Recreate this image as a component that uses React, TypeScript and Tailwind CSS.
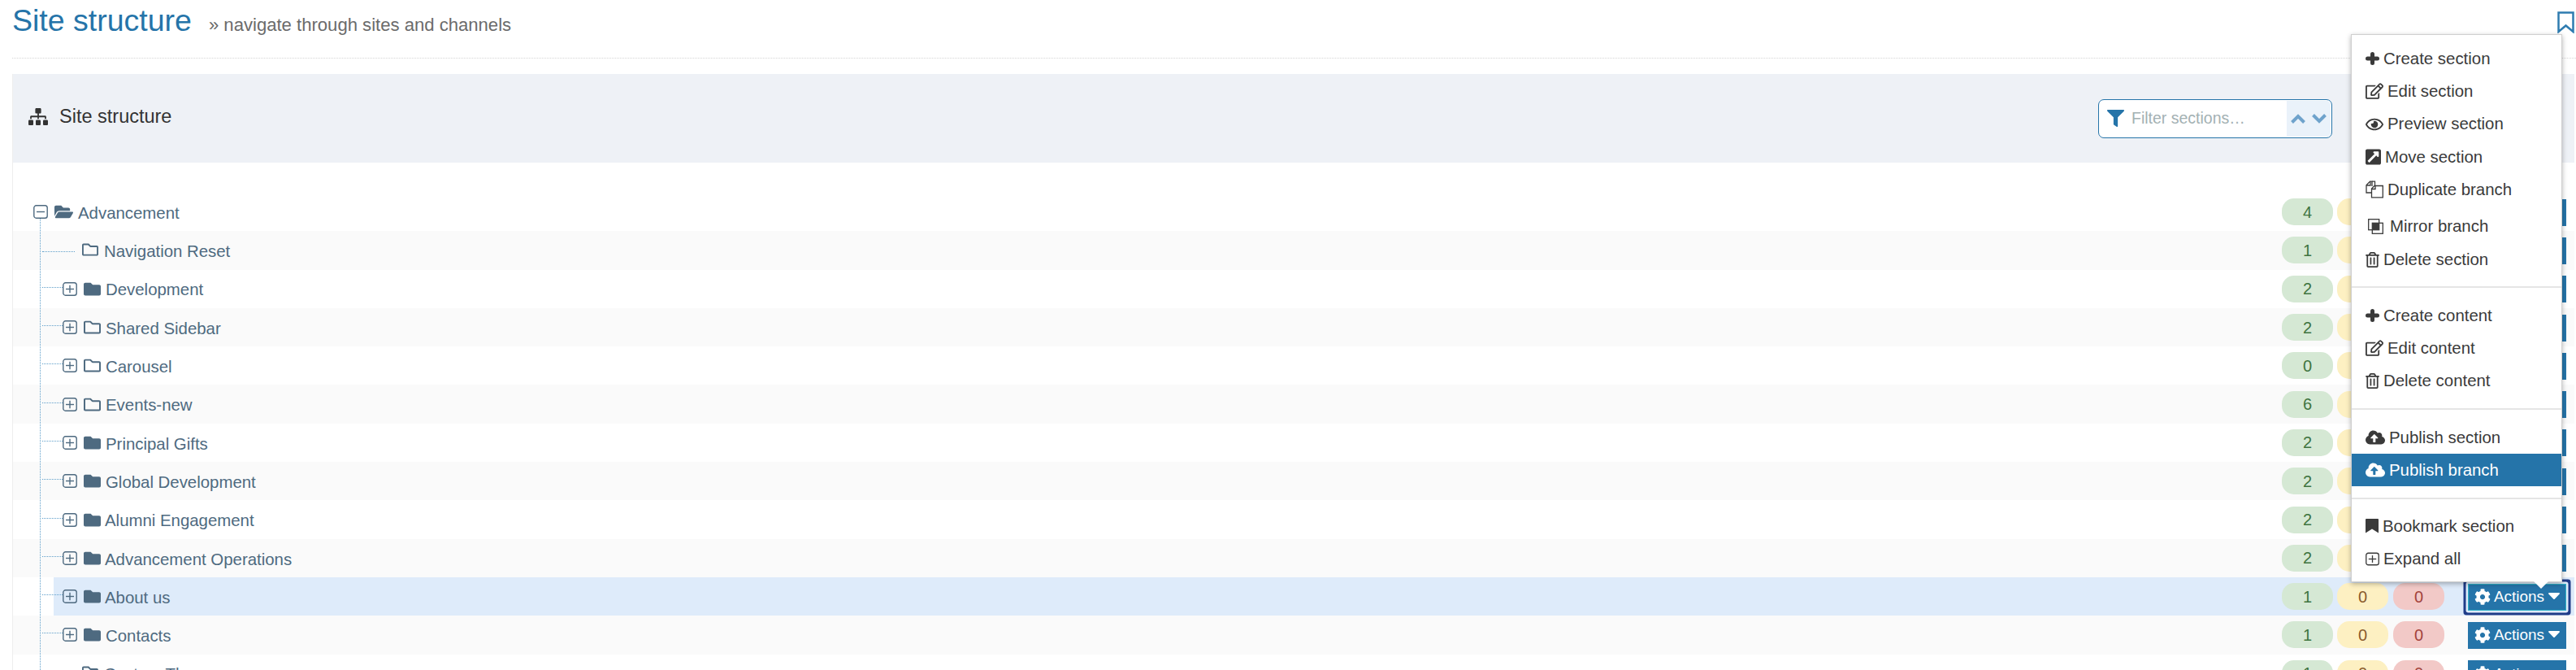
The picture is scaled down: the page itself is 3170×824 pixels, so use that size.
import React from 'react';
import {
  FaCloudUploadAlt,
  FaCog,
  FaExternalLinkSquareAlt,
  FaFilter,
  FaFolder,
  FaFolderOpen,
  FaRegEdit,
  FaRegEye,
  FaRegFolder,
  FaRegTrashAlt,
  FaSitemap,
} from 'react-icons/fa';

type RowKind = 'root' | 'leaf' | 'closed';

interface TreeRow {
  name: string;
  kind: RowKind;
  emptyFolder?: boolean;
  count: number;
  focused?: boolean;
  textOffset?: string;
}

const rows: TreeRow[] = [
  { name: 'Advancement', kind: 'root', count: 4 },
  { name: 'Navigation Reset', kind: 'leaf', count: 1 },
  { name: 'Development', kind: 'closed', count: 2 },
  { name: 'Shared Sidebar', kind: 'closed', emptyFolder: true, count: 2 },
  { name: 'Carousel', kind: 'closed', emptyFolder: true, count: 0 },
  { name: 'Events-new', kind: 'closed', emptyFolder: true, count: 6 },
  { name: 'Principal Gifts', kind: 'closed', count: 2 },
  { name: 'Global Development', kind: 'closed', count: 2 },
  { name: 'Alumni Engagement', kind: 'closed', count: 2, textOffset: 'ml-[5px]' },
  { name: 'Advancement Operations', kind: 'closed', count: 2, textOffset: 'ml-[5px]' },
  { name: 'About us', kind: 'closed', count: 1, focused: true, textOffset: 'ml-[5px]' },
  { name: 'Contacts', kind: 'closed', count: 1 },
  { name: 'Custom Theme', kind: 'leaf', count: 1 },
];

const BoxIcon = ({ minus, className }: { minus?: boolean; className: string }) => (
  <svg viewBox="0 0 18 17" className={className} fill="none" stroke="currentColor" strokeWidth="1.4">
    <rect x="0.8" y="0.8" width="16.4" height="15.4" rx="2.8" />
    <path d="M4 8.5h10" />
    {!minus && <path d="M9 3.8v9.4" />}
  </svg>
);

const PlusIcon = () => (
  <svg viewBox="0 0 17 16" className="w-[17px] h-[16px]" fill="none" stroke="currentColor" strokeWidth="5" strokeLinecap="round">
    <path d="M2.500 8h12" />
    <path d="M8.500 2.500v11" />
  </svg>
);

const BookmarkIcon = () => (
  <svg viewBox="0 0 16 18" className="w-[16px] h-[18px]" fill="currentColor">
    <path d="M1 0h14a1 1 0 0 1 1 1v16.500l-8-5-8 5V1a1 1 0 0 1 1-1z" />
  </svg>
);

const DuplicateIcon = () => (
  <svg viewBox="0 0 22 22" className="w-[22px] h-[22px]" fill="none" stroke="currentColor" strokeWidth="1.3">
    <path d="M8 7V1.2h-2.500L1 5.700v9.300h6.500" />
    <path d="M1 6h5V1.500" />
    <path d="M8 1.200h3.500V6" />
    <path d="M13.500 6.500H11L7.500 10v10.800h13.800V6.500z" />
    <path d="M7.500 10.500h4.500V6.500" />
  </svg>
);

const MirrorIcon = () => (
  <svg viewBox="0 0 19 19" className="w-[19px] h-[19px]" fill="none" stroke="currentColor" strokeWidth="1.3">
    <rect x="0.700" y="0.700" width="13" height="13" />
    <rect x="5.300" y="5.300" width="13" height="13" />
    <rect x="5.300" y="5.300" width="8.400" height="8.400" fill="currentColor" stroke="none" />
  </svg>
);

const Caret = () => (
  <svg viewBox="0 0 14 8" className="w-[14px] h-[8px] -mt-[2px]" fill="currentColor">
    <path d="M1 0h12a.9.9 0 0 1 .7 1.500L7.700 7.700a1 1 0 0 1-1.400 0L.3 1.500A.9.9 0 0 1 1 0z" />
  </svg>
);

const RowLabel = ({ row }: { row: TreeRow }) => {
  if (row.kind === 'root') {
    return (
      <div className="flex items-center pl-[25px] pt-[3px]">
        <BoxIcon minus className="w-[18px] h-[17px] -mt-[4px]" />
        <FaFolderOpen className="ml-[8px] w-[23px] h-[21px] -mt-[4px]" />
        <span className="ml-[6px]">{row.name}</span>
      </div>
    );
  }
  if (row.kind === 'leaf') {
    return (
      <div className="flex items-center pl-[36px] pt-[3px]">
        <span className="w-[40px] border-t border-dotted border-[#5f9fca]" />
        <FaRegFolder className="ml-[9px] w-[20px] h-[20px] -mt-[5px]" />
        <span className="ml-[7px]">{row.name}</span>
      </div>
    );
  }
  const FolderIcon = row.emptyFolder ? FaRegFolder : FaFolder;
  return (
    <div className="flex items-center pl-[36px] pt-[3px]">
      <span className="w-[25px] border-t border-dotted border-[#5f9fca] -mt-[7px]" />
      <BoxIcon className="w-[18px] h-[17px] -mt-[3px]" />
      <FolderIcon className="ml-[8px] w-[21px] h-[21px] -mt-[3px]" />
      <span className={row.textOffset ?? 'ml-[6px]'}>{row.name}</span>
    </div>
  );
};

const Row = ({ row, index }: { row: TreeRow; index: number }) => {
  const background = row.focused
    ? 'bg-[linear-gradient(to_right,transparent_50px,#deebfa_50px)]'
    : index % 2 === 1
      ? 'bg-[#fafafa]'
      : 'bg-white';
  return (
    <div className={`flex items-center justify-between h-[47.3px] shrink-0 pr-[10px] ${background}`}>
      <RowLabel row={row} />
      <div className="flex items-center">
        <span className="w-[63px] h-[33px] rounded-[15px] bg-[#d5e8d4] text-[#3f7440] text-[20px] flex items-center justify-center">
          {row.count}
        </span>
        <span className="ml-[5px] w-[63px] h-[33px] rounded-[15px] bg-[#fdf0c2] text-[#8a5a2b] text-[20px] flex items-center justify-center">
          0
        </span>
        <span className="ml-[6px] w-[63px] h-[33px] rounded-[15px] bg-[#f2c9c7] text-[#a3423c] text-[20px] flex items-center justify-center">
          0
        </span>
        <button
          className={`ml-[29px] w-[121px] h-[33px] mt-[1px] bg-[#2574a9] text-white text-[18.9px] flex items-center pl-[8px] ${
            row.focused
              ? 'rounded-[1px] shadow-[inset_0_0_0_1px_#2fb3c6,0_0_0_2.5px_#deebfa,0_0_0_5.5px_#1f3c88]'
              : ''
          }`}
        >
          <FaCog className="w-[20px] h-[20px]" />
          <span className="ml-[4px]">Actions</span>
          <span className="ml-[5px]">
            <Caret />
          </span>
        </button>
      </div>
    </div>
  );
};

const MenuItem = ({
  icon,
  label,
  gap = 'ml-[5px]',
  active,
  size = 'h-[40px]',
}: {
  icon: React.ReactNode;
  label: string;
  gap?: string;
  active?: boolean;
  size?: string;
}) => (
  <div className={`flex items-center pl-[17px] ${size} ${active ? 'bg-[#2574a9] text-white' : 'text-[#3a3a3a]'}`}>
    {icon}
    <span className={gap}>{label}</span>
  </div>
);

const Divider = ({ spacing }: { spacing: string }) => <div className={`h-[2px] bg-[#e5e5e5] ${spacing}`} />;

const ActionsMenu = () => (
  <div className="absolute top-[42px] right-[17px] w-[260px] h-[674px] z-20 bg-white border border-[#cfcfcf] shadow-[0_2px_6px_rgba(0,0,0,0.3)] pt-[9px] text-[20.4px]">
    <MenuItem icon={<PlusIcon />} label="Create section" />
    <MenuItem icon={<FaRegEdit className="w-[22px] h-[20px]" />} label="Edit section" />
    <MenuItem icon={<FaRegEye className="w-[22px] h-[20px]" />} label="Preview section" size="h-[41px]" />
    <MenuItem icon={<FaExternalLinkSquareAlt className="w-[19px] h-[22px]" />} label="Move section" />
    <MenuItem icon={<DuplicateIcon />} label="Duplicate branch" />
    <MenuItem
      icon={
        <span className="pl-[3px]">
          <MirrorIcon />
        </span>
      }
      label="Mirror branch"
      gap="ml-[8px]"
      size="h-[46px] pt-[4px]"
    />
    <MenuItem icon={<FaRegTrashAlt className="w-[17px] h-[19px]" />} label="Delete section" />
    <Divider spacing="mt-[13px] mb-[14px]" />
    <MenuItem icon={<PlusIcon />} label="Create content" />
    <MenuItem icon={<FaRegEdit className="w-[22px] h-[20px]" />} label="Edit content" />
    <MenuItem icon={<FaRegTrashAlt className="w-[17px] h-[19px]" />} label="Delete content" />
    <Divider spacing="my-[14px]" />
    <MenuItem icon={<FaCloudUploadAlt className="w-[24px] h-[20px]" />} label="Publish section" />
    <MenuItem icon={<FaCloudUploadAlt className="w-[24px] h-[20px]" />} label="Publish branch" active />
    <Divider spacing="mt-[14px] mb-[13px]" />
    <MenuItem icon={<BookmarkIcon />} label="Bookmark section" />
    <MenuItem icon={<BoxIcon className="w-[17px] h-[17px]" />} label="Expand all" />
    <span className="absolute top-full left-[224px] border-x-[9px] border-t-[9px] border-x-transparent border-t-white" />
  </div>
);

const App: React.FC = () => {
  return (
    <div className="relative w-[3170px] h-[824px] overflow-hidden bg-white flex flex-col font-['Liberation_Sans',Arial,sans-serif]">
      <header className="flex justify-between h-[72px] shrink-0 ml-[15px] border-b border-dotted border-[#d5d5d5] pr-[2px]">
        <div className="flex items-baseline pt-[4px]">
          <h1 className="text-[37.5px] leading-[42px] text-[#2574a9]">Site structure</h1>
          <span className="ml-[21px] text-[22.1px] text-[#6b6b6b]">» navigate through sites and channels</span>
        </div>
        <svg viewBox="0 0 21 27" className="w-[21px] h-[27px] mt-[14px]" fill="none" stroke="#2f7cb0" strokeWidth="2.5">
          <path d="M1.500 1.500h18v23.500l-9-7.500-9 7.500z" />
        </svg>
      </header>

      <main className="mt-[19px] ml-[15px] mr-[2px] flex-1 flex flex-col min-h-0 border-l border-[#eeeeee]">
        <div className="flex items-center justify-between h-[109px] shrink-0 bg-[#eef1f6] pl-[19px] pr-[298px]">
          <div className="flex items-center text-[#333333] text-[23.5px] -mt-[4px]">
            <FaSitemap preserveAspectRatio="none" className="w-[24px] h-[21px] -mt-[1px]" />
            <span className="ml-[14px]">Site structure</span>
          </div>
          <div className="flex items-stretch w-[288px] h-[48px] p-[1px] bg-white border border-[#2574a9] rounded-[7px]">
            <div className="flex items-center flex-1 pl-[9px]">
              <FaFilter className="w-[21px] h-[21px] text-[#2574a9] shrink-0" />
              <input
                readOnly
                placeholder="Filter sections…"
                className="ml-[9px] w-[170px] outline-none text-[19.5px] placeholder:text-[#a3b1b3]"
              />
            </div>
            <div className="flex items-center justify-center gap-[8px] w-[54px] bg-[#eaf2fa] rounded-r-[5px] text-[#6fa3cc]">
              <svg viewBox="0 0 18 12" className="w-[18px] h-[12px]" fill="none" stroke="currentColor" strokeWidth="4">
                <path d="M1.500 10.500L9 3l7.500 7.500" />
              </svg>
              <svg viewBox="0 0 18 12" className="w-[18px] h-[12px]" fill="none" stroke="currentColor" strokeWidth="4">
                <path d="M1.500 1.500L9 9l7.500-7.500" />
              </svg>
            </div>
          </div>
        </div>

        <div className="relative flex-1 min-h-0 pt-[37px] flex flex-col overflow-hidden text-[20.4px] text-[#4e6a80]">
          <span className="absolute left-[33px] top-[69px] bottom-0 border-l border-dotted border-[#5f9fca]" />
          {rows.map((row, i) => (
            <Row key={row.name} row={row} index={i} />
          ))}
        </div>
      </main>

      <ActionsMenu />
    </div>
  );
};

export default App;
